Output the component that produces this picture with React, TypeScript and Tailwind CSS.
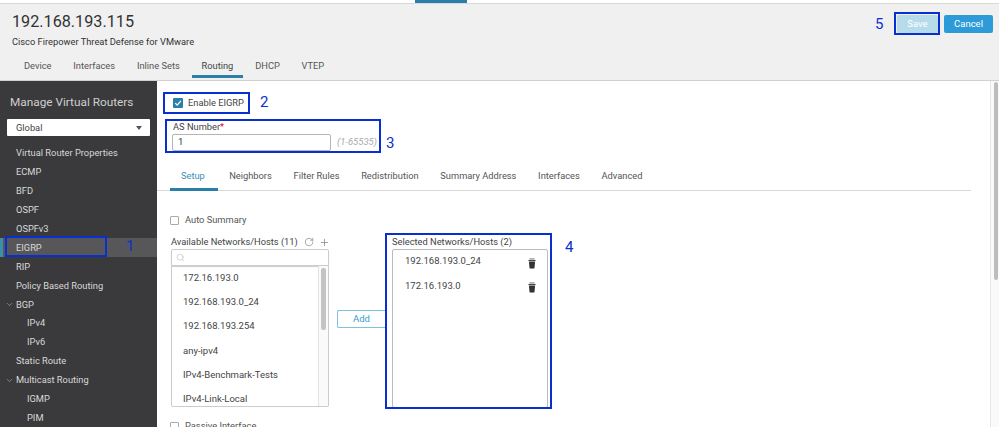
import { ChevronDown, Plus, RotateCw, Search } from 'lucide-react';

const tabs = ['Device', 'Interfaces', 'Inline Sets', 'Routing', 'DHCP', 'VTEP'];
const subTabs = ['Setup', 'Neighbors', 'Filter Rules', 'Redistribution', 'Summary Address', 'Interfaces', 'Advanced'];
const available = ['172.16.193.0', '192.168.193.0_24', '192.168.193.254', 'any-ipv4', 'IPv4-Benchmark-Tests', 'IPv4-Link-Local'];
const selected = ['192.168.193.0_24', '172.16.193.0'];

const navItems = [
    { label: 'Virtual Router Properties' },
    { label: 'ECMP' },
    { label: 'BFD' },
    { label: 'OSPF' },
    { label: 'OSPFv3' },
    { label: 'EIGRP', active: true },
    { label: 'RIP' },
    { label: 'Policy Based Routing' },
    { label: 'BGP', open: true },
    { label: 'IPv4', child: true },
    { label: 'IPv6', child: true },
    { label: 'Static Route' },
    { label: 'Multicast Routing', open: true },
    { label: 'IGMP', child: true },
    { label: 'PIM', child: true },
];

function Sidebar() {
    return (
        <aside className="w-[157px] shrink-0 bg-[#3a3a3c] text-[#d8d8d8]">
            <h2 className="pl-[10px] pt-[13px] text-[11.8px] leading-[16px] text-[#cfcfcf]">Manage Virtual Routers</h2>
            <div className="mx-[7px] mt-[9px] flex h-[17px] items-center justify-between rounded-[1px] bg-white pl-[9px] pr-[8px] text-[9.3px] text-[#444]">
                Global
                <span className="h-0 w-0 border-x-[3px] border-t-[4px] border-x-transparent border-t-[#555]" />
            </div>
            <ul className="mt-[8px] text-[9.3px]">
                {navItems.map((item) => (
                    <li
                        key={item.label}
                        className={`relative flex h-[18.9px] items-center ${item.child ? 'pl-[27px]' : 'pl-[16px]'} ${item.active ? 'bg-[#575759]' : ''}`}
                    >
                        {item.active && <span className="absolute inset-y-0 left-0 w-[3px] bg-[#3d8fa8]" />}
                        {item.open && <ChevronDown className="absolute left-[5px] top-[5px] size-[9px]" strokeWidth={1.2} />}
                        {item.label}
                    </li>
                ))}
            </ul>
        </aside>
    );
}

function CheckBox({ checked }: { checked?: boolean }) {
    return checked ? (
        <span className="flex size-[10px] items-center justify-center rounded-[1px] bg-[#2a7fa8]">
            <svg viewBox="0 0 10 10" className="size-[8px]" fill="none" stroke="white" strokeWidth="1.6">
                <path d="M1.5 5.2 4 7.6 8.6 2.4" />
            </svg>
        </span>
    ) : (
        <span className="size-[9px] rounded-[1px] border border-[#aaa] bg-white" />
    );
}

function TrashIcon() {
    return (
        <svg viewBox="0 0 8 11" className="mt-[4px] h-[11px] w-[8px]" fill="#333">
            <path d="M1.5 0.6h5v0.7h-5z" />
            <path d="M0.4 2h7.2v0.9H0.4z" />
            <path d="M0.9 3.5h6.2L6.4 10.6H1.6z" />
        </svg>
    );
}

function Main() {
    return (
        <main className="flex min-w-0 flex-1 bg-white">
            <div className="min-w-0 flex-1 overflow-hidden">
                <label className="ml-[16px] mt-[17px] flex h-[10px] items-center gap-[5px] text-[9.3px] text-[#444]">
                    <CheckBox checked />
                    Enable EIGRP
                </label>
                <div className="ml-[16px] mt-[13px] text-[9.3px] leading-[12px] text-[#444]">
                    AS Number<span className="text-red-600">*</span>
                </div>
                <div className="ml-[15px] mt-[1px] flex items-center">
                    <div className="flex h-[17px] w-[159px] items-center rounded-[2px] border border-[#b5b5b5] pl-[5px] text-[9.5px] text-[#333]">1</div>
                    <span className="ml-[6px] text-[9.5px] italic text-[#aaa]">(1-65535)</span>
                </div>
                <div className="mt-[17px] flex h-[23px] w-[814px] gap-[21.7px] border-b border-[#d8d8d8] pl-[24px] text-[9.3px] text-[#555]">
                    {subTabs.map((t, i) => (
                        <span
                            key={t}
                            className={`relative flex h-full items-start pt-[1px] ${i === 0 ? 'w-[26.5px] text-[#3a8fb7]' : ''}`}
                        >
                            {t}
                            {i === 0 && <span className="absolute -left-[11px] -right-[10px] -bottom-[1px] h-[3px] bg-[#2a7fa8]" />}
                        </span>
                    ))}
                </div>
                <label className="ml-[13px] mt-[24px] flex h-[10px] items-center gap-[6px] text-[9.3px] text-[#555]">
                    <CheckBox />
                    Auto Summary
                </label>
                <div className="mt-[10px] flex items-start">
                    <div className="ml-[14px] w-[158px]">
                        <div className="flex h-[14px] items-center whitespace-nowrap text-[9.3px] text-[#444]">
                            Available Networks/Hosts (11)
                            <RotateCw className="ml-[6px] size-[10px] shrink-0 text-[#666]" strokeWidth={1.3} />
                            <Plus className="ml-[5px] size-[11px] shrink-0 text-[#666]" strokeWidth={1.3} />
                        </div>
                        <div className="flex h-[17px] items-center rounded-t-[2px] border border-[#ccc] pl-[4px] shadow-[0_1px_1px_#ccc]">
                            <Search className="size-[9px] text-[#bbb]" strokeWidth={1.6} />
                        </div>
                        <div className="flex h-[141px] overflow-hidden rounded-b-[2px] border border-t-0 border-[#ccc]">
                            <ul className="flex-1 pl-[11px] text-[9.5px] text-[#444]">
                                {available.map((a) => (
                                    <li key={a} className="flex h-[24.2px] items-center">{a}</li>
                                ))}
                            </ul>
                            <div className="w-[10px] border-l border-[#e4e4e4] bg-[#fafafa] px-[2px] pt-[2px]">
                                <div className="h-[62px] rounded-[2px] bg-[#c4c4c4]" />
                            </div>
                        </div>
                    </div>
                    <div className="ml-[8px] mt-[75px] flex h-[18px] w-[48px] items-center justify-center rounded-l-[2px] border border-r-0 border-[#7fc1e0] text-[9.5px] text-[#3a9bd0]">
                        Add
                    </div>
                    <div className="ml-[7px] mt-[1px] w-[156px]">
                        <div className="h-[13px] whitespace-nowrap text-[9.3px] leading-[12px] text-[#444]">Selected Networks/Hosts (2)</div>
                        <ul className="h-[159px] rounded-[2px] border border-[#bbb] text-[9.5px] text-[#444]">
                            {selected.map((s) => (
                                <li key={s} className="flex h-[24.5px] items-center justify-between pb-[2px] pl-[12px] pr-[11px]">
                                    {s}
                                    <TrashIcon />
                                </li>
                            ))}
                        </ul>
                    </div>
                </div>
                <label className="ml-[13px] mt-[13px] flex h-[10px] items-center gap-[6px] text-[9.3px] text-[#555]">
                    <CheckBox />
                    Passive Interface
                </label>
            </div>
            <div className="w-[9px] shrink-0 border-l border-[#e6e6e6] bg-[#fafafa] pl-[3px] pr-[1px] pt-[1px]">
                <div className="h-[198px] rounded-[2px] bg-[#bdbdbd]" />
            </div>
        </main>
    );
}

export default function App() {
    return (
        <div className="relative flex h-[427px] w-[999px] flex-col overflow-hidden bg-white font-['Roboto',sans-serif]">
            <div className="h-[4px] shrink-0 border-b border-[#d8d8d8] bg-white pl-[415px]">
                <div className="h-[3px] w-[52px] bg-[#2a7fa8]" />
            </div>
            <header className="h-[77px] shrink-0 border-b border-[#d0d0d0] bg-[#f0f0f0]">
                <div className="flex justify-between pl-[12px] pr-[6px]">
                    <div>
                        <h1 className="pt-[9px] text-[16.2px] leading-[18px] text-[#333]">192.168.193.115</h1>
                        <p className="mt-[5px] text-[9.3px] leading-[12px] text-[#333]">Cisco Firepower Threat Defense for VMware</p>
                    </div>
                    <div className="flex gap-[6px] pt-[11px]">
                        <button className="h-[18px] w-[41px] rounded-[2px] bg-[#b6dcec] text-[9.5px] text-white">Save</button>
                        <button className="h-[18px] w-[49px] rounded-[2px] bg-[#2d9bd8] text-[9.5px] text-white">Cancel</button>
                    </div>
                </div>
                <nav className="mt-[6px] flex gap-[21.8px] pl-[24px] text-[9.3px] text-[#555]">
                    {tabs.map((t) => (
                        <span key={t} className={`relative flex h-[24px] items-start pt-[5px] ${t === 'Routing' ? 'text-[#444]' : ''}`}>
                            {t}
                            {t === 'Routing' && <span className="absolute -inset-x-[10px] bottom-0 h-[3px] bg-[#2a7fa8]" />}
                        </span>
                    ))}
                </nav>
            </header>
            <div className="flex min-h-0 flex-1">
                <Sidebar />
                <Main />
            </div>

            {/* annotations drawn over the screenshot */}
            <span className="absolute left-[5px] top-[236px] h-[21px] w-[102px] border-2 border-[#0a2fd0]" />
            <span className="absolute left-[163px] top-[92px] h-[22px] w-[87px] border-2 border-[#0a2fd0]" />
            <span className="absolute left-[165px] top-[119px] h-[34px] w-[216px] border-2 border-[#0a2fd0]" />
            <span className="absolute left-[385px] top-[233px] h-[176px] w-[167px] border-2 border-[#0a2fd0]" />
            <span className="absolute left-[894px] top-[12px] h-[23px] w-[46px] border-2 border-[#0a2fd0]" />
            <span className="absolute left-[126px] top-[237px] text-[15px] leading-[18px] text-[#0a2fd0]">1</span>
            <span className="absolute left-[260px] top-[93px] text-[15px] leading-[18px] text-[#0a2fd0]">2</span>
            <span className="absolute left-[386px] top-[134px] text-[15px] leading-[18px] text-[#0a2fd0]">3</span>
            <span className="absolute left-[565px] top-[238px] text-[15px] leading-[18px] text-[#0a2fd0]">4</span>
            <span className="absolute left-[875px] top-[15px] text-[15px] leading-[18px] text-[#0a2fd0]">5</span>
        </div>
    );
}
